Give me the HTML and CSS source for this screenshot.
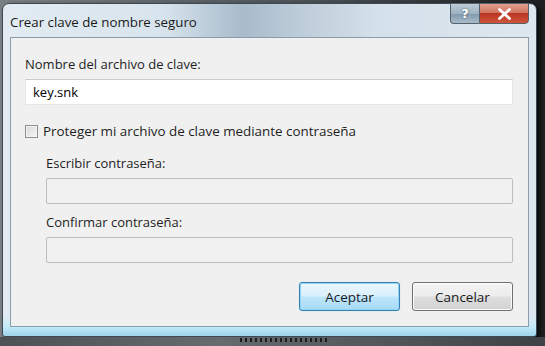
FILE: index.html
```html
<!DOCTYPE html>
<html lang="es">
<head>
    <meta charset="UTF-8">
    <meta name="viewport" content="width=device-width, initial-scale=1.0">
    <title>Crear clave de nombre seguro</title>
    <link rel="stylesheet" href="styles.css">
</head>
<body>
    <div class="window">
        <!-- Title bar -->
        <div class="titlebar">
            <span class="title">Crear clave de nombre seguro</span>
            <div class="caption-buttons">
                <button class="cap help">?</button>
                <button class="cap close">
                    <svg width="15" height="12" viewBox="0 0 15 12">
                        <path d="M2.5 1.5 L12.5 10.5 M12.5 1.5 L2.5 10.5" stroke="#fff" stroke-width="2.8" stroke-linecap="round"/>
                    </svg>
                </button>
            </div>
        </div>

        <!-- Client area -->
        <div class="client">
            <div class="field-label">Nombre del archivo de clave:</div>
            <div class="textbox">key.snk</div>

            <label class="check-row">
                <span class="checkbox"></span>
                Proteger mi archivo de clave mediante contraseña
            </label>

            <div class="password-group">
                <div class="field-label">Escribir contraseña:</div>
                <div class="textbox disabled"></div>
                <div class="field-label second">Confirmar contraseña:</div>
                <div class="textbox disabled"></div>
            </div>

            <div class="actions">
                <button class="btn default">Aceptar</button>
                <button class="btn">Cancelar</button>
            </div>
        </div>
    </div>

    <!-- what shows behind the dialog -->
    <div class="behind"></div>
</body>
</html>
```

FILE: styles.css
```css
body {
    margin: 0;
    padding: 0;
    width: 545px;
    height: 346px;
    overflow: hidden;
    background: linear-gradient(to right, #7a7f83 0%, #4a4f53 60%, #1e2022 97%);
    font-family: 'Open Sans', 'Noto Sans', sans-serif;
    font-size: 13px;
    color: #1e1e1e;
}

/* Window frame */
.window {
    box-sizing: border-box;
    width: 535px;
    height: 334px;
    margin: 3px 0 0 2px;
    padding: 0 7px 7px;
    border: 1px solid #3d4a55;
    border-radius: 7px 7px 3px 3px;
    background:
        linear-gradient(to bottom, rgba(255,255,255,0) 0%, rgba(255,255,255,0) 94%, #c4ebfa 97%, #9fd4ec 100%),
        linear-gradient(to right, #e2ebf2 0%, #d8e4ed 30%, #a7bbcb 45%, #bccbd8 55%, #d4e0ea 70%, #dde7ef 100%);
    box-shadow: 3px 2px 4px rgba(0,0,0,0.7);
}

/* Title bar */
.titlebar {
    height: 33px;
    display: flex;
    align-items: flex-start;
    justify-content: space-between;
}
.title {
    margin-top: 9px;
    font-size: 13.3px;
    color: #1a1a1a;
}
.caption-buttons {
    display: flex;
    margin-top: -1px;
}
.cap {
    height: 21px;
    border: 1px solid #56616b;
    padding: 0;
    margin: 0;
    display: flex;
    align-items: center;
    justify-content: center;
}
.help {
    width: 29px;
    border-right: none;
    border-radius: 0 0 0 4px;
    background: linear-gradient(to bottom, #bccbd6 0%, #9fb3c2 50%, #8199ac 51%, #a8bccb 100%);
    color: #fff;
    font-family: 'DejaVu Sans', sans-serif;
    font-size: 13px;
    font-weight: bold;
    text-shadow: 0 0 2px #3c4a56;
}
.close {
    width: 50px;
    border-radius: 0 0 4px 0;
    background: linear-gradient(to bottom, #e3a08e 0%, #d07561 45%, #bb3522 50%, #cf553c 100%);
}

/* Client area */
.client {
    box-sizing: border-box;
    height: 290px;
    border: 1px solid #8a9cac;
    background: #f0f0f0;
    padding: 16px 15px 0 14px;
}
.field-label {
    line-height: 20px;
    height: 20px;
}
.textbox {
    box-sizing: border-box;
    height: 26px;
    margin-top: 5px;
    padding: 0 7px;
    line-height: 24px;
    background: #fff;
    border: 1px solid #e2e6ea;
    border-top-color: #c6ccd2;
    color: #000;
}
.textbox.disabled {
    background: #f1f1f1;
    border: 1px solid #bdbdbd;
    border-radius: 2px;
}

/* Checkbox */
.check-row {
    display: flex;
    align-items: center;
    gap: 5px;
    height: 20px;
    margin-top: 16px;
    font-size: 13.4px;
}
.checkbox {
    box-sizing: border-box;
    width: 13px;
    height: 13px;
    border: 1px solid #8e8f8f;
    background: linear-gradient(135deg, #d9d9d9 0%, #f6f6f6 100%);
    box-shadow: inset 0 0 0 1px #f4f4f4;
}

/* Password fields */
.password-group {
    margin: 12px 0 0 21px;
}
.password-group .textbox {
    margin-top: 5px;
}
.field-label.second {
    margin-top: 8px;
}

/* Buttons */
.actions {
    display: flex;
    justify-content: flex-end;
    gap: 12px;
    margin-top: 19px;
}
.btn {
    box-sizing: border-box;
    width: 101px;
    height: 29px;
    font-family: 'Open Sans', 'Noto Sans', sans-serif;
    font-size: 13.5px;
    color: #1a1a1a;
    border: 1px solid #707070;
    border-radius: 3px;
    background: linear-gradient(to bottom, #f4f4f4 0%, #ececec 48%, #dedede 52%, #d2d2d2 100%);
    box-shadow: inset 0 0 0 1px #fbfbfb;
}
.btn.default {
    border-color: #3c7fb1;
    background: linear-gradient(to bottom, #eaf6fd 0%, #d9f0fc 48%, #bee6fd 52%, #a7d9f5 100%);
    box-shadow: inset 0 0 0 1px #8ed6f6, 0 0 1px #8ed6f6;
}

/* Background behind dialog */
.behind {
    height: 9px;
    background:
        repeating-linear-gradient(to right, #1c1c1c 0 2px, transparent 2px 5px) 240px 1px / 90px 4px no-repeat,
        linear-gradient(to right, #4c5156, #666b70 40%, #3e4246);
}
```
